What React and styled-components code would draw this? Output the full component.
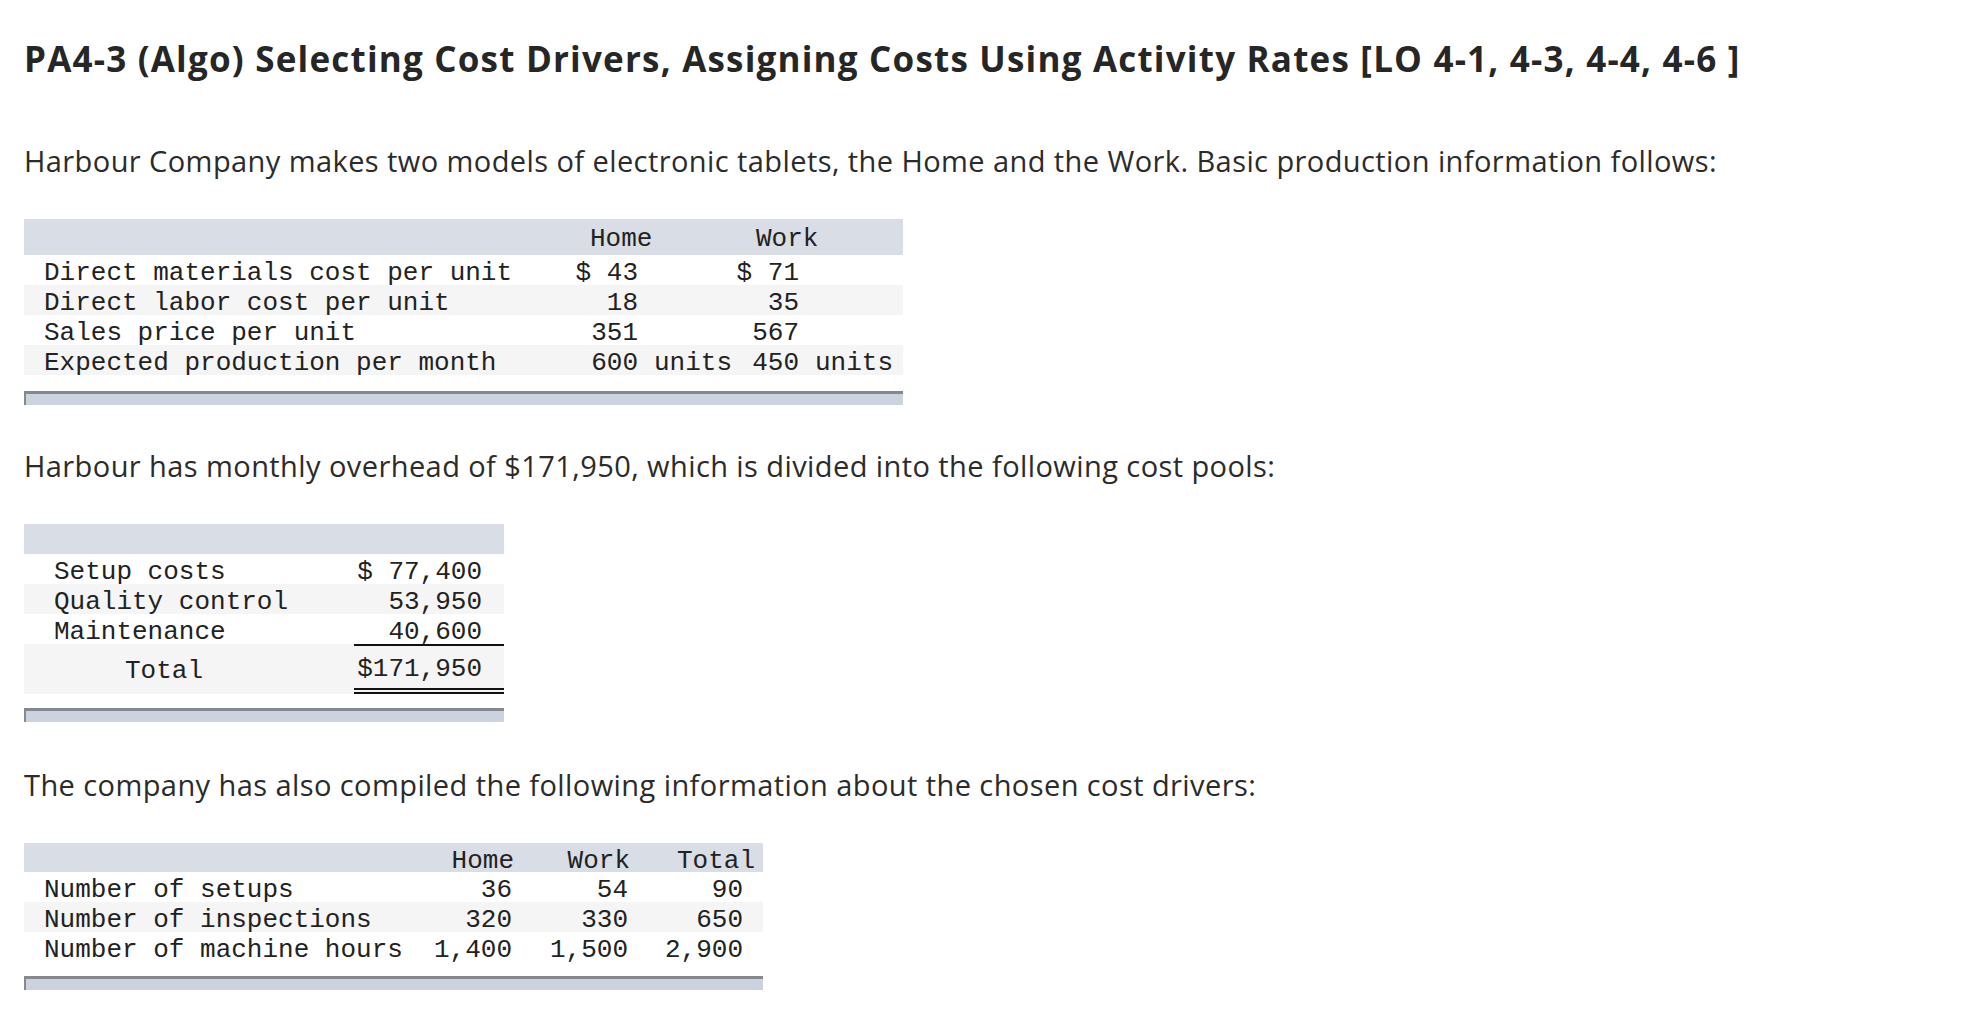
import React from 'react';
import styled, { createGlobalStyle } from 'styled-components';

const GlobalStyle = createGlobalStyle`
  body {
    margin: 0;
    background: #ffffff;
    font-family: "Open Sans", Lato, sans-serif;
    color: #2b2b2b;
  }
`;

const Page = styled.div`
  padding: 39px 0 0 24px;
`;

const Title = styled.h2`
  margin: 0;
  font-size: 35px;
  line-height: 40px;
  font-weight: 700;
  letter-spacing: 1.2px;
  color: #262626;
`;

const Para = styled.p`
  margin: ${(p) => p.$top}px 0 0 0;
  font-size: 29px;
  line-height: 36px;
  letter-spacing: 0.42px;
  color: #2b2b2b;
`;

const TableBlock = styled.div`
  margin-top: 40px;
  width: ${(p) => p.$width}px;
  font-family: "Liberation Mono", "Courier New", monospace;
  font-size: 26px;
  color: #222;
`;

const Row = styled.div`
  display: grid;
  grid-template-columns: ${(p) => p.$cols};
  height: ${(p) => p.$h || 30}px;
  align-items: center;
  background: ${(p) => p.$bg || '#ffffff'};
  white-space: pre;
`;

const HeadRow = styled(Row)`
  background: #d9dde5;
`;

const Cell = styled.div`
  text-align: ${(p) => p.$align || 'left'};
  padding-top: 5px;
  padding-left: ${(p) => p.$pl || 0}px;
  padding-right: ${(p) => p.$pr || 0}px;
  grid-column: ${(p) => p.$span || 'auto'};
  line-height: 27px;
`;

const TotalCell = styled(Cell)`
  align-self: stretch;
  display: flex;
  align-items: center;
  justify-content: flex-end;
  border-top: 2px solid #111;
  border-bottom: 6px double #111;
`;

const FooterBar = styled.div`
  margin-top: ${(p) => p.$top}px;
  height: 11px;
  background: #cdd3de;
  border-top: 3px solid #86888f;
  border-left: 2px solid #86888f;
`;

const shade = '#f5f5f5';

const cols1 = '541px 73px 96px 65px 104px';
const production = [
  ['Direct materials cost per unit', '$ 43', '', '$ 71', ''],
  ['Direct labor cost per unit', '18', '', '35', ''],
  ['Sales price per unit', '351', '', '567', ''],
  ['Expected production per month', '600', 'units', '450', 'units'],
];

const cols2 = '330px 150px';
const pools = [
  ['Setup costs', '$ 77,400'],
  ['Quality control', '53,950'],
  ['Maintenance', '40,600'],
];

const cols3 = '396px 100px 116px 127px';
const drivers = [
  ['Number of setups', '36', '54', '90'],
  ['Number of inspections', '320', '330', '650'],
  ['Number of machine hours', '1,400', '1,500', '2,900'],
];

const App = () => {
  return (
    <Page>
      <GlobalStyle />
      <Title>
        PA4-3 (Algo) Selecting Cost Drivers, Assigning Costs Using Activity Rates [LO 4-1, 4-3, 4-4, 4-6 ]
      </Title>

      <Para $top={64}>
        Harbour Company makes two models of electronic tablets, the Home and the Work. Basic production
        information follows:
      </Para>

      <TableBlock $width={879}>
        <HeadRow $cols={cols1} $h={36}>
          <Cell />
          <Cell $span="2 / 4" $pl={25}>Home</Cell>
          <Cell $span="4 / 6" $pl={22}>Work</Cell>
        </HeadRow>
        {production.map((r, i) => (
          <Row key={r[0]} $cols={cols1} $bg={i % 2 ? shade : '#fff'}>
            <Cell $pl={20}>{r[0]}</Cell>
            <Cell $align="right">{r[1]}</Cell>
            <Cell $pl={16}>{r[2]}</Cell>
            <Cell $align="right">{r[3]}</Cell>
            <Cell $pl={16}>{r[4]}</Cell>
          </Row>
        ))}
        <FooterBar $top={16} />
      </TableBlock>

      <Para $top={43}>Harbour has monthly overhead of $171,950, which is divided into the following cost pools:</Para>

      <TableBlock $width={480}>
        <HeadRow $cols={cols2} />
        {pools.map((r, i) => (
          <Row key={r[0]} $cols={cols2} $bg={i % 2 ? shade : '#fff'}>
            <Cell $pl={30}>{r[0]}</Cell>
            <Cell $align="right" $pr={22}>{r[1]}</Cell>
          </Row>
        ))}
        <Row $cols={cols2} $bg={shade} $h={50}>
          <Cell $pl={101}>Total</Cell>
          <TotalCell $pr={22}>$171,950</TotalCell>
        </Row>
        <FooterBar $top={14} />
      </TableBlock>

      <Para $top={45}>The company has also compiled the following information about the chosen cost drivers:</Para>

      <TableBlock $width={739}>
        <HeadRow $cols={cols3} $h={29}>
          <Cell />
          <Cell $align="right" $pr={6}>Home</Cell>
          <Cell $align="right" $pr={6}>Work</Cell>
          <Cell $align="right" $pr={8}>Total</Cell>
        </HeadRow>
        {drivers.map((r, i) => (
          <Row key={r[0]} $cols={cols3} $bg={i % 2 ? shade : '#fff'}>
            <Cell $pl={20}>{r[0]}</Cell>
            <Cell $align="right" $pr={8}>{r[1]}</Cell>
            <Cell $align="right" $pr={8}>{r[2]}</Cell>
            <Cell $align="right" $pr={20}>{r[3]}</Cell>
          </Row>
        ))}
        <FooterBar $top={14} />
      </TableBlock>
    </Page>
  );
};

export default App;
